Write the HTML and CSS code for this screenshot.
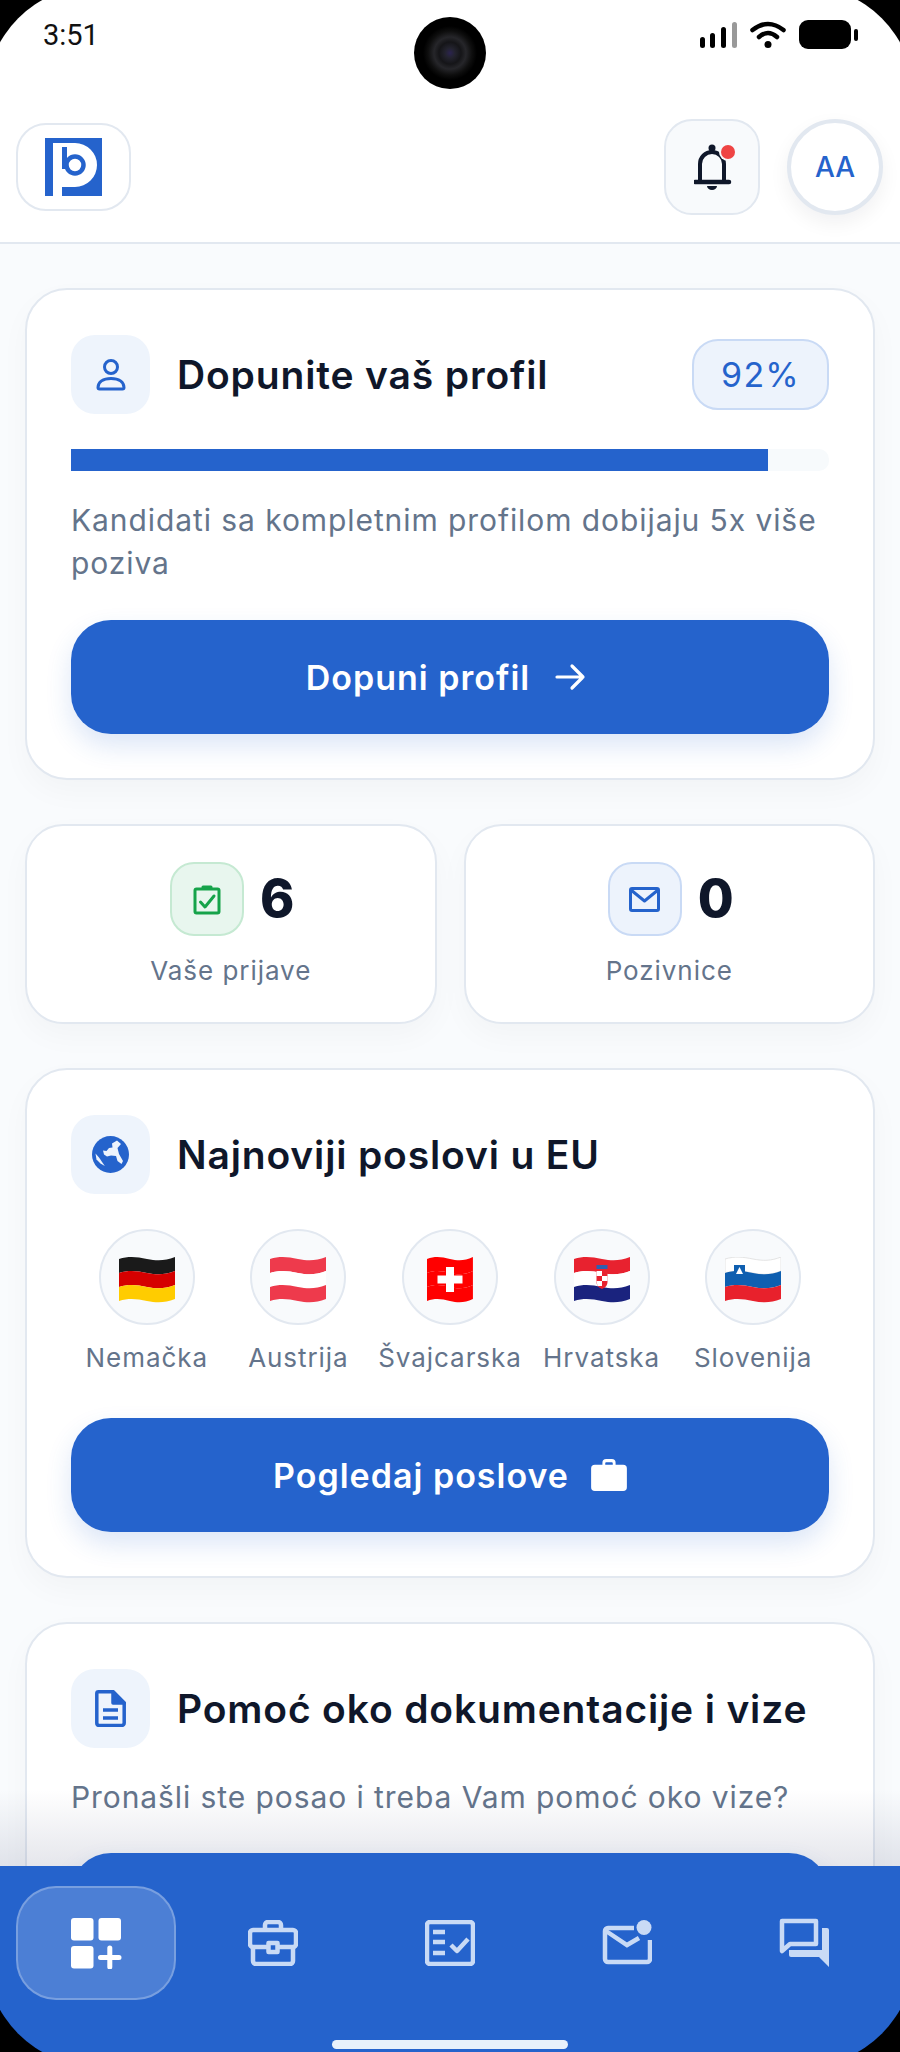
FILE: index.html
```html
<!DOCTYPE html>
<html lang="sr">
  <head>
    <meta charset="utf-8" />
    <meta name="viewport" content="width=device-width" />
    <title>Početna</title>
    <link rel="stylesheet" href="styles.css">
  </head>

  <body>
    <svg class="defs" width="0" height="0" aria-hidden="true">
      <defs>
        <path id="band1" d="M0 2C10-1 18 0 28 2C38 4 46 4 56 0V14C46 18 38 18 28 16C18 14 10 13 0 16Z" />
        <path id="band2" d="M0 16C10 13 18 14 28 16C38 18 46 18 56 14V28C46 32 38 32 28 30C18 28 10 27 0 30Z" />
        <path id="band3" d="M0 30C10 27 18 28 28 30C38 32 46 32 56 28V42C46 46 38 46 28 44C18 42 10 41 0 44Z" />
      </defs>
    </svg>

    <div class="phone">
      <header class="top">
        <div class="status">
          <span class="time">3:51</span>
          <span class="camera"></span>
          <div class="status-icons">
            <svg width="37" height="26" viewBox="0 0 37 26">
              <rect x="0" y="15" width="5" height="11" rx="2.5" />
              <rect x="10" y="11" width="5" height="15" rx="2.5" />
              <rect x="21" y="5" width="5" height="21" rx="2.5" />
              <rect x="32" y="0" width="5" height="26" rx="2.5" fill="#999" />
            </svg>
            <svg width="36" height="27" viewBox="0 0 36 27" fill="none" stroke="#000" stroke-width="4.5" stroke-linecap="round">
              <path d="M2.500 9Q18-3 33.500 9" />
              <path d="M9 16Q18 8 27 16" />
              <circle cx="18" cy="23.500" r="3.500" fill="#000" stroke="none" />
            </svg>
            <svg width="59" height="29" viewBox="0 0 59 29">
              <rect x="0" y="0" width="52" height="29" rx="9" />
              <rect x="55" y="9" width="4" height="12" rx="2" />
            </svg>
          </div>
        </div>
        <div class="topbar">
          <a class="logo">
            <svg width="57" height="58" viewBox="0 0 57 58">
              <rect width="57" height="58" fill="#2563cc" />
              <path d="M8 5H30A22 22 0 0 1 30 49H17V58H8Z" fill="#fff" />
              <rect x="17" y="9" width="5" height="22" fill="#2563cc" />
              <circle cx="30" cy="27" r="8.500" fill="#fff" stroke="#2563cc" stroke-width="4.500" />
            </svg>
          </a>
          <div class="top-actions">
            <button class="bell">
              <svg width="44" height="46" viewBox="0 0 44 46" fill="none">
                <circle cx="18" cy="4" r="3.500" fill="#0f172a" />
                <path d="M6 37V20a12 12 0 0 1 24 0V37" stroke="#0f172a" stroke-width="4" />
                <path d="M1 38H35" stroke="#0f172a" stroke-width="4.500" stroke-linecap="round" />
                <path d="M13 42H23A5 4 0 0 1 13 42Z" fill="#0f172a" />
                <circle cx="34" cy="8" r="9" fill="#f8fafc" />
                <circle cx="34" cy="8" r="7" fill="#ef4444" />
              </svg>
            </button>
            <div class="avatar">AA</div>
          </div>
        </div>
      </header>

      <main class="content">
        <section class="card">
          <div class="card-head">
            <span class="head-icon">
              <svg width="32" height="32" viewBox="0 0 32 32" fill="none" stroke="#2563cc" stroke-width="3">
                <circle cx="16" cy="8" r="6.500" />
                <path d="M3 28.500C3 23 8 19.500 16 19.500S29 23 29 28.500Q29 30 27.500 30H4.500Q3 30 3 28.500Z" />
              </svg>
            </span>
            <h2 class="card-title">Dopunite vaš profil</h2>
            <span class="percent">92%</span>
          </div>
          <div class="progress"><div class="progress-fill" style="width: 92%"></div></div>
          <p class="card-text">Kandidati sa kompletnim profilom dobijaju 5x više poziva</p>
          <button class="btn btn-arrow">
            Dopuni profil
            <svg width="31" height="28" viewBox="0 0 31 28" fill="none" stroke="#fff" stroke-width="3.200" stroke-linecap="round" stroke-linejoin="round">
              <path d="M2 14H28M17 3L28 14L17 25" />
            </svg>
          </button>
        </section>

        <div class="stats">
          <div class="stat">
            <div class="stat-row">
              <span class="stat-icon green">
                <svg width="28" height="31" viewBox="0 0 28 31" fill="none" stroke="#16a34a" stroke-width="3" stroke-linejoin="round">
                  <rect x="2" y="5" width="24" height="24" rx="1.500" />
                  <path d="M10 5V3H18V5" />
                  <path d="M7.500 18L12 23L21 12" stroke-linecap="round" />
                </svg>
              </span>
              <span class="stat-value">6</span>
            </div>
            <div class="stat-label">Vaše prijave</div>
          </div>
          <div class="stat">
            <div class="stat-row">
              <span class="stat-icon blue">
                <svg width="31" height="25" viewBox="0 0 31 25" fill="none" stroke="#2563cc" stroke-width="3" stroke-linejoin="round">
                  <rect x="1.500" y="1.500" width="28" height="22" rx="1.500" />
                  <path d="M2 3L15.500 14L29 3" />
                </svg>
              </span>
              <span class="stat-value">0</span>
            </div>
            <div class="stat-label">Pozivnice</div>
          </div>
        </div>

        <section class="card">
          <div class="card-head">
            <span class="head-icon">
              <svg width="37" height="37" viewBox="0 0 37 37">
                <circle cx="18.500" cy="18.500" r="18.500" fill="#2563cc" />
                <path d="M11 14.500L14.500 15L17 12L20.500 11.500L20 7.500L25 4.500L29 8L25.500 12L27 18L31 25L29.500 28L25.500 25L24 20L19 19.500L15 20.500L12 18.500Z" fill="#edf3fc" />
                <path d="M3.500 17.500L7.200 21.800L12.800 30L8.500 27.500L4.500 23.500Z" fill="#edf3fc" />
              </svg>
            </span>
            <h2 class="card-title">Najnoviji poslovi u EU</h2>
          </div>
          <div class="flags">
            <div class="flag-item">
              <span class="flag-circle">
                <svg width="56" height="46" viewBox="0 0 56 46">
                  <use href="#band1" fill="#1a1a1a" />
                  <use href="#band2" fill="#d50000" />
                  <use href="#band3" fill="#ffcc00" />
                </svg>
              </span>
              <span class="flag-name">Nemačka</span>
            </div>
            <div class="flag-item">
              <span class="flag-circle">
                <svg width="56" height="46" viewBox="0 0 56 46">
                  <use href="#band1" fill="#ee3a4c" />
                  <use href="#band2" fill="#fff" />
                  <use href="#band3" fill="#ee3a4c" />
                </svg>
              </span>
              <span class="flag-name">Austrija</span>
            </div>
            <div class="flag-item">
              <span class="flag-circle">
                <svg width="56" height="46" viewBox="0 0 56 46">
                  <g transform="translate(5 0) scale(.82 1)">
                    <use href="#band1" fill="#f00" />
                    <use href="#band2" fill="#f00" />
                    <use href="#band3" fill="#f00" />
                  </g>
                  <rect x="24" y="10" width="8" height="25" fill="#fff" />
                  <rect x="15.500" y="18.500" width="25" height="8" fill="#fff" />
                </svg>
              </span>
              <span class="flag-name">Švajcarska</span>
            </div>
            <div class="flag-item">
              <span class="flag-circle">
                <svg width="56" height="46" viewBox="0 0 56 46">
                  <use href="#band1" fill="#e8222f" />
                  <use href="#band2" fill="#fff" />
                  <use href="#band3" fill="#1a237e" />
                  <path d="M22.500 10H33.500V25Q33.500 30 28 32Q22.500 30 22.500 25Z" fill="#e8222f" />
                  <path d="M22.500 14H28V19H22.500ZM28 19H33.500V24H28ZM22.500 24H28V29H23.500Z" fill="#fff" />
                  <rect x="22.500" y="8" width="11" height="4" fill="#2f5fb0" />
                </svg>
              </span>
              <span class="flag-name">Hrvatska</span>
            </div>
            <div class="flag-item">
              <span class="flag-circle">
                <svg width="56" height="46" viewBox="0 0 56 46">
                  <use href="#band1" fill="#fff" stroke="#ddd" stroke-width=".8" />
                  <use href="#band2" fill="#0f5fb0" />
                  <use href="#band3" fill="#e8212c" />
                  <path d="M9 8H20V16Q20 20 14.500 22Q9 20 9 16Z" fill="#0f5fb0" />
                  <path d="M14.500 10L18 17H11Z" fill="#fff" />
                </svg>
              </span>
              <span class="flag-name">Slovenija</span>
            </div>
          </div>
          <button class="btn btn-tight">
            Pogledaj poslove
            <svg width="36" height="32" viewBox="0 0 38 34">
              <path fill="#fff" d="M12 6V4a4 4 0 0 1 4-4h6a4 4 0 0 1 4 4v2h8a4 4 0 0 1 4 4v20a4 4 0 0 1-4 4H4a4 4 0 0 1-4-4V10a4 4 0 0 1 4-4ZM16 3.500a1 1 0 0 0-1 1V6h8V4.500a1 1 0 0 0-1-1Z" fill-rule="evenodd" />
            </svg>
          </button>
        </section>

        <section class="card">
          <div class="card-head">
            <span class="head-icon">
              <svg width="31" height="37" viewBox="0 0 31 37" fill="none" stroke="#2563cc" stroke-width="3.500" stroke-linejoin="round">
                <path d="M3.500 1.800H18L29.200 13V33a2.500 2.500 0 0 1-2.500 2.500H4A2.500 2.500 0 0 1 1.800 33V3.500Q1.800 1.800 3.500 1.800Z" />
                <path d="M18 1.800V13H29.200Z" fill="#2563cc" />
                <path d="M8 20H23M8 28H23" />
              </svg>
            </span>
            <h2 class="card-title">Pomoć oko dokumentacije i vize</h2>
          </div>
          <p class="card-text">Pronašli ste posao i treba Vam pomoć oko vize?</p>
          <button class="btn btn-short">Zatražite pomoć</button>
        </section>
      </main>

      <div class="nav-fade"></div>
      <nav class="nav">
        <a class="nav-item active">
          <svg width="52" height="52" viewBox="0 0 52 52" fill="#fff">
            <rect x="1" y="1" width="22.500" height="22.500" rx="3" />
            <rect x="28.500" y="1" width="22.500" height="22.500" rx="3" />
            <rect x="1" y="29" width="22.500" height="22.500" rx="3" />
            <path d="M30.500 40.500H49M39.800 31V50" stroke="#fff" stroke-width="5" stroke-linecap="round" />
          </svg>
        </a>
        <a class="nav-item">
          <svg width="50" height="46" viewBox="0 0 50 46" fill="none" stroke="#c9daf5" stroke-width="4.500" stroke-linejoin="round">
            <path d="M17 10V5a3 3 0 0 1 3-3h10a3 3 0 0 1 3 3v5" />
            <path d="M5 10H45a3 3 0 0 1 3 3V24a3 3 0 0 1-3 3H5a3 3 0 0 1-3-3V13a3 3 0 0 1 3-3Z" />
            <path d="M5 27V41a3 3 0 0 0 3 3H42a3 3 0 0 0 3-3V27" />
            <rect x="20.500" y="23" width="9" height="9" fill="#2563cc" />
          </svg>
        </a>
        <a class="nav-item">
          <svg width="50" height="46" viewBox="0 0 50 46" fill="none" stroke="#c9daf5" stroke-width="4.500" stroke-linejoin="round">
            <rect x="2" y="2" width="46" height="42" rx="3" />
            <path d="M8 12H20M8 22H20M8 33H20" />
            <path d="M26 25L32 31L43 19" />
          </svg>
        </a>
        <a class="nav-item">
          <svg width="50" height="46" viewBox="0 0 50 46" fill="none" stroke="#c9daf5" stroke-width="4.500">
            <path d="M32 8H6a3 3 0 0 0-3 3V39a3 3 0 0 0 3 3H45a3 3 0 0 0 3-3V20" />
            <path d="M4 11L25 25L37 18" />
            <circle cx="42" cy="7.500" r="7.500" fill="#c9daf5" stroke="none" />
          </svg>
        </a>
        <a class="nav-item">
          <svg width="50" height="50" viewBox="0 0 50 50" fill="none">
            <path d="M3 3H37V26H11L3 33Z" stroke="#c9daf5" stroke-width="4.500" stroke-linejoin="round" />
            <path d="M43 10H48a2 2 0 0 1 2 2V49L40 39H12a2 2 0 0 1-2-2V32H43Z" fill="#c9daf5" />
          </svg>
        </a>
      </nav>
      <div class="home-bar"></div>
      <div class="bezel"></div>
    </div>
  </body>
</html>
```

FILE: styles.css
```css
* {
  box-sizing: border-box;
}

html,
body {
  margin: 0;
  padding: 0;
}

body {
  font-family: "Inter", sans-serif;
  color: #0f172a;
}

.defs {
  position: absolute;
}

.phone {
  position: relative;
  width: 900px;
  height: 2052px;
  overflow: hidden;
  background: #f9fbfd;
}

/* header */
.top {
  background: #fff;
  border-bottom: 2px solid #e2e8f0;
}

.status {
  position: relative;
  height: 96px;
  display: flex;
  justify-content: space-between;
  align-items: flex-start;
  padding: 20px 42px 0 43px;
}

.time {
  font-family: "Roboto", sans-serif;
  font-size: 29px;
  line-height: 30px;
  color: #111;
}

.camera {
  position: absolute;
  left: 414px;
  top: 17px;
  width: 72px;
  height: 72px;
  border-radius: 50%;
  background: radial-gradient(circle, #2b2350 0, #23232e 5px, #151518 11px, #26262a 16px, #0e0e0e 22px, #000 27px);
}

.status-icons {
  display: flex;
  align-items: center;
  gap: 13px;
}

.topbar {
  display: flex;
  justify-content: space-between;
  align-items: center;
  padding: 23px 17px 27px 16px;
}

.logo {
  display: flex;
  align-items: center;
  justify-content: center;
  width: 115px;
  height: 88px;
  background: #fff;
  border: 2px solid #e2e8f0;
  border-radius: 30px;
}

.top-actions {
  display: flex;
  gap: 27px;
}

.bell {
  display: flex;
  align-items: center;
  justify-content: center;
  width: 96px;
  height: 96px;
  padding: 0 0 0 8px;
  background: #f8fafc;
  border: 2px solid #e2e8f0;
  border-radius: 28px;
}

.avatar {
  display: flex;
  align-items: center;
  justify-content: center;
  width: 96px;
  height: 96px;
  border: 4px solid #e2e8f0;
  border-radius: 50%;
  background: #fff;
  color: #2563cc;
  font-size: 28px;
  font-weight: 500;
  box-shadow: 0 8px 20px rgba(15, 23, 42, 0.06);
}

/* cards */
.content {
  display: flex;
  flex-direction: column;
  gap: 44px;
  padding: 44px 25px 0;
}

.card {
  background: #fff;
  border: 2px solid #e2e8f0;
  border-radius: 42px;
  padding: 45px 44px 44px;
  box-shadow: 0 12px 30px rgba(15, 23, 42, 0.03);
}

.card-head {
  display: flex;
  align-items: center;
  gap: 27px;
}

.head-icon {
  display: flex;
  align-items: center;
  justify-content: center;
  flex: none;
  width: 79px;
  height: 79px;
  background: #eef4fc;
  border-radius: 24px;
}

.card-title {
  flex: 1;
  margin: 0;
  font-size: 39px;
  font-weight: 600;
  letter-spacing: 0.85px;
  line-height: 46px;
  color: #0f172a;
  white-space: nowrap;
}

.percent {
  display: flex;
  align-items: center;
  justify-content: center;
  width: 137px;
  height: 71px;
  background: #edf3fc;
  border: 2px solid #c9daf5;
  border-radius: 26px;
  color: #2563cc;
  font-size: 34px;
  font-weight: 400;
  letter-spacing: 1.2px;
}

.progress {
  height: 22px;
  margin-top: 35px;
  background: #f7fafc;
  border-radius: 0 10px 10px 0;
}

.progress-fill {
  height: 100%;
  background: #2563cc;
}

.card-text {
  margin: 28px 0 0;
  font-size: 30px;
  letter-spacing: 0.92px;
  line-height: 43px;
  color: #64748b;
}

.btn {
  display: flex;
  align-items: center;
  justify-content: center;
  gap: 22px;
  width: 100%;
  height: 114px;
  margin-top: 35px;
  border: 0;
  border-radius: 40px;
  background: #2563cc;
  color: #fff;
  font-family: "Inter", sans-serif;
  font-size: 34px;
  font-weight: 600;
  letter-spacing: 1px;
  box-shadow: 0 12px 26px rgba(37, 99, 204, 0.16);
}

.btn-arrow {
  gap: 25px;
  padding-right: 14px;
}

.btn-tight {
  margin-top: 43px;
}

/* sits over the fade above the nav */
.btn-short {
  position: relative;
  z-index: 2;
  margin-top: 34px;
}

/* counters */
.stats {
  display: grid;
  grid-template-columns: 1fr 1fr;
  gap: 27px;
}

.stat {
  background: #fff;
  border: 2px solid #e2e8f0;
  border-radius: 38px;
  padding: 36px 10px 34px;
  box-shadow: 0 12px 30px rgba(15, 23, 42, 0.03);
}

.stat-row {
  display: flex;
  align-items: center;
  justify-content: center;
  gap: 16px;
}

.stat-icon {
  display: flex;
  align-items: center;
  justify-content: center;
  width: 74px;
  height: 74px;
  border-radius: 24px;
  border: 2px solid;
}

.stat-icon.green {
  background: #e8f6ee;
  border-color: #c5e9d2;
}

.stat-icon.blue {
  background: #edf3fc;
  border-color: #c9daf5;
}

.stat-value {
  font-size: 52px;
  font-weight: 800;
  letter-spacing: -3px;
  line-height: 62px;
  color: #0f172a;
}

.stat-label {
  margin-top: 18px;
  text-align: center;
  font-size: 26px;
  letter-spacing: 0.95px;
  line-height: 34px;
  color: #64748b;
}

/* countries */
.flags {
  display: grid;
  grid-template-columns: repeat(5, 1fr);
  margin-top: 35px;
}

.flag-item {
  display: flex;
  flex-direction: column;
  align-items: center;
  gap: 16px;
}

.flag-circle {
  display: flex;
  align-items: center;
  justify-content: center;
  width: 96px;
  height: 96px;
  padding-top: 5px;
  background: #f8fafc;
  border: 2px solid #e2e8f0;
  border-radius: 50%;
}

.flag-name {
  font-size: 26px;
  letter-spacing: 0.95px;
  line-height: 34px;
  color: #64748b;
  white-space: nowrap;
}

/* bottom navigation */
.nav-fade {
  position: absolute;
  z-index: 1;
  left: 0;
  right: 0;
  bottom: 186px;
  height: 76px;
  background: linear-gradient(rgba(20, 30, 80, 0), rgba(20, 30, 80, 0.11));
}

.nav {
  position: absolute;
  z-index: 3;
  left: 0;
  right: 0;
  bottom: 0;
  height: 186px;
  display: grid;
  grid-template-columns: repeat(5, 177px);
  padding: 20px 0 0 7px;
  align-items: start;
  background: #2563cc;
}

.nav-item {
  display: flex;
  align-items: center;
  justify-content: center;
  height: 114px;
}

.nav-item.active {
  justify-self: center;
  width: 160px;
  background: rgba(255, 255, 255, 0.18);
  border: 2px solid rgba(255, 255, 255, 0.25);
  border-radius: 40px;
}

.home-bar {
  position: absolute;
  z-index: 4;
  left: 332px;
  bottom: 3px;
  width: 236px;
  height: 9px;
  border-radius: 5px;
  background: #e8f1fb;
}

/* screen corners */
.bezel {
  position: absolute;
  z-index: 5;
  inset: -14px;
  border-radius: 110px;
  box-shadow: 0 0 0 60px #000;
  pointer-events: none;
}
```
